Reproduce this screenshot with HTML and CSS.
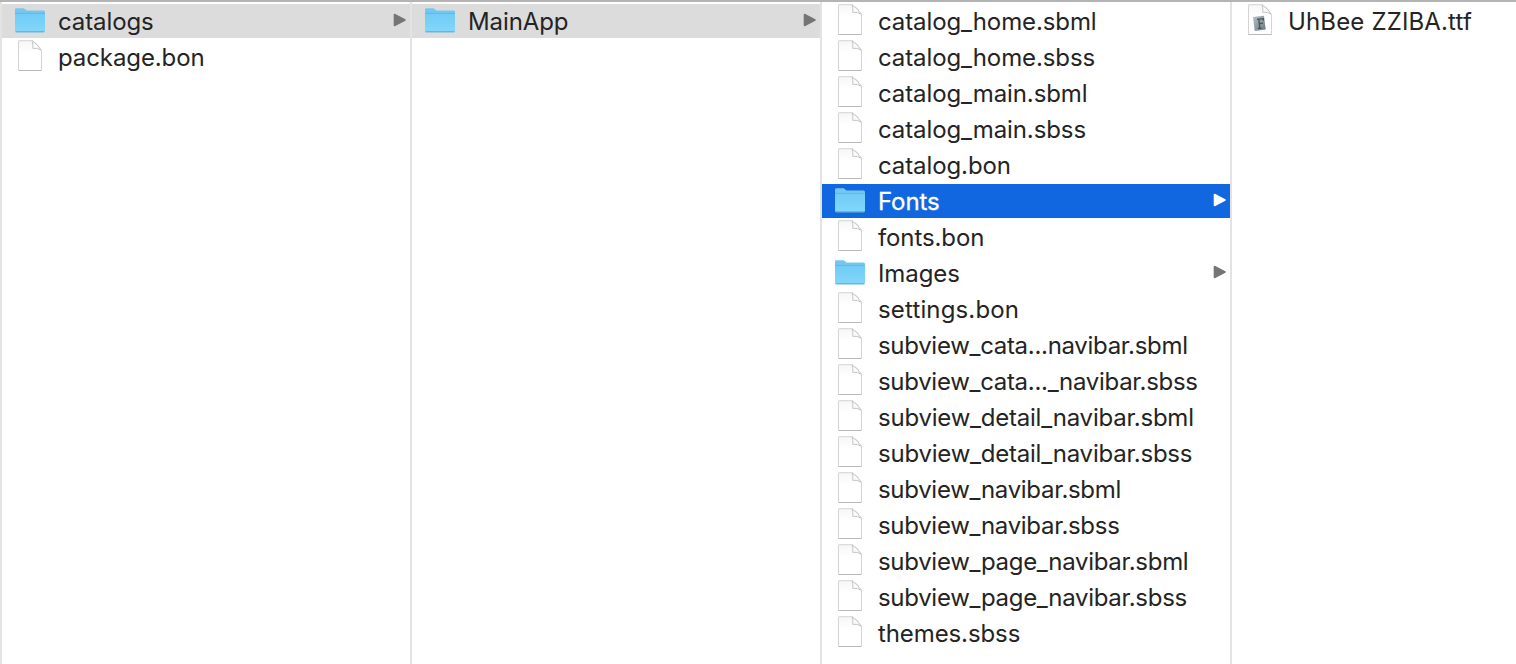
FILE: index.html
```html
<!DOCTYPE html>
<html lang="en">
<head>
<meta charset="utf-8">
<title>MainApp</title>
<link rel="stylesheet" href="styles.css">
</head>
<body>
<svg class="defs" width="0" height="0" aria-hidden="true">
  <defs>
    <linearGradient id="folder-front" x1="0" y1="0" x2="0" y2="1">
      <stop offset="0" stop-color="#70cbf5"/><stop offset="1" stop-color="#82d7fb"/>
    </linearGradient>
    <linearGradient id="paper" x1="0" y1="0" x2="0" y2="1">
      <stop offset="0" stop-color="#f6f6f6"/><stop offset=".4" stop-color="#fff"/>
    </linearGradient>
    <linearGradient id="tile" x1="0" y1="0" x2="1" y2="1">
      <stop offset="0" stop-color="#b3c1c7"/><stop offset="1" stop-color="#6c787d"/>
    </linearGradient>
    <symbol id="folder" viewBox="0 0 32 34">
      <path d="M1 7V5.500Q1 4.200 2.300 4.200H9q1 0 1.800.8l1 1Q12.400 6.500 13.500 6.500h16Q31 6.500 31 8V10H1z" fill="#74c8ef"/>
      <path d="M1 8.800h30v17.700q0 1.700-1.500 1.700h-27Q1 28.200 1 26.500z" fill="url(#folder-front)"/>
      <path d="M1 9.300h30" stroke="#62b8e0" stroke-width="1"/>
      <path d="M1.500 27.800h29" stroke="#62a5c4" stroke-width="1"/>
    </symbol>
    <symbol id="file" viewBox="0 0 32 34">
      <path d="M4.500 1.200q0-.5.500-.5h13Q23 3 27.500 10.500V30q0 .5-.5.500H5q-.5 0-.5-.5z" fill="url(#paper)" stroke="#d4d4d4"/>
      <path d="M18 .8Q19.200 3.500 18.800 8.300 23.500 7.600 27.300 10.300 24 4.500 18 .8z" fill="#fbfbfb" stroke="#c6c6c6"/>
      <path d="M4.500 30.500h23" stroke="#b8b8b8"/>
    </symbol>
    <symbol id="font-file" viewBox="0 0 32 34">
      <use href="#file" width="32" height="34"/>
      <path d="M9 13 20 11.700 21.700 25.500 10.700 27z" fill="url(#tile)"/>
      <path d="M13 15.300l6.300-.7.200 2M14.800 15.200l1 9M15.300 19.600l3.700-.4M14 24.500l3.500-.4" stroke="#46545a" stroke-width="1.300" fill="none"/>
    </symbol>
    <symbol id="arrow" viewBox="0 0 14 14">
      <path d="M1.500 1.500 12 7 1.500 12.500z" fill="currentColor" stroke="currentColor" stroke-width="1.600" stroke-linejoin="round"/>
    </symbol>
  </defs>
</svg>
<main class="browser">
  <ul class="column">
    <li class="row open"><svg class="icon"><use href="#folder"/></svg><span class="name">catalogs</span><svg class="arrow"><use href="#arrow"/></svg></li>
    <li class="row"><svg class="icon"><use href="#file"/></svg><span class="name">package.bon</span></li>
  </ul>
  <ul class="column">
    <li class="row open"><svg class="icon"><use href="#folder"/></svg><span class="name">MainApp</span><svg class="arrow"><use href="#arrow"/></svg></li>
  </ul>
  <ul class="column">
    <li class="row"><svg class="icon"><use href="#file"/></svg><span class="name">catalog_home.sbml</span></li>
    <li class="row"><svg class="icon"><use href="#file"/></svg><span class="name">catalog_home.sbss</span></li>
    <li class="row"><svg class="icon"><use href="#file"/></svg><span class="name">catalog_main.sbml</span></li>
    <li class="row"><svg class="icon"><use href="#file"/></svg><span class="name">catalog_main.sbss</span></li>
    <li class="row"><svg class="icon"><use href="#file"/></svg><span class="name">catalog.bon</span></li>
    <li class="row selected"><svg class="icon"><use href="#folder"/></svg><span class="name">Fonts</span><svg class="arrow"><use href="#arrow"/></svg></li>
    <li class="row"><svg class="icon"><use href="#file"/></svg><span class="name">fonts.bon</span></li>
    <li class="row"><svg class="icon"><use href="#folder"/></svg><span class="name">Images</span><svg class="arrow"><use href="#arrow"/></svg></li>
    <li class="row"><svg class="icon"><use href="#file"/></svg><span class="name loose">settings.bon</span></li>
    <li class="row"><svg class="icon"><use href="#file"/></svg><span class="name tight">subview_cata...navibar.sbml</span></li>
    <li class="row"><svg class="icon"><use href="#file"/></svg><span class="name tight">subview_cata..._navibar.sbss</span></li>
    <li class="row"><svg class="icon"><use href="#file"/></svg><span class="name snug">subview_detail_navibar.sbml</span></li>
    <li class="row"><svg class="icon"><use href="#file"/></svg><span class="name snug">subview_detail_navibar.sbss</span></li>
    <li class="row"><svg class="icon"><use href="#file"/></svg><span class="name tight">subview_navibar.sbml</span></li>
    <li class="row"><svg class="icon"><use href="#file"/></svg><span class="name tight">subview_navibar.sbss</span></li>
    <li class="row"><svg class="icon"><use href="#file"/></svg><span class="name tight">subview_page_navibar.sbml</span></li>
    <li class="row"><svg class="icon"><use href="#file"/></svg><span class="name tight">subview_page_navibar.sbss</span></li>
    <li class="row"><svg class="icon"><use href="#file"/></svg><span class="name">themes.sbss</span></li>
  </ul>
  <ul class="column">
    <li class="row"><svg class="icon"><use href="#font-file"/></svg><span class="name loose">UhBee ZZIBA.ttf</span></li>
  </ul>
</main>
</body>
</html>
```
FILE: styles.css
```css
* { box-sizing: border-box; }
body {
  margin: 0;
  background: #fff;
  color: #242424;
  font: 24px/34px Inter, "Liberation Sans", sans-serif;
}
.defs { display: block; }
.browser {
  display: grid;
  grid-template-columns: 410px 410px 410px 1fr;
  height: 664px;
  border-top: 2px solid #b4b4b4;
  overflow: hidden;
}
.column {
  display: flex;
  flex-direction: column;
  gap: 2px;
  margin: 0;
  padding: 2px 0 0;
  border-left: 2px solid #e3e3e3;
  list-style: none;
  min-width: 0;
}
.row {
  display: flex;
  align-items: center;
  flex: 0 0 34px;
  height: 34px;
  padding: 0 3px 0 12px;
}
.icon { flex: none; width: 32px; height: 34px; }
.name {
  flex: 1;
  margin-left: 12px;
  padding-top: 2px;
  white-space: nowrap;
  letter-spacing: -0.1px;
}
.snug { letter-spacing: -0.22px; }
.tight { letter-spacing: -0.3px; }
.loose { letter-spacing: 0.15px; }
.arrow { width: 14px; height: 14px; color: #757575; margin-top: -2px; }
.open { background: #dcdcdc; }
.selected { background: #1167df; color: #fff; }
.selected .name { -webkit-text-stroke: 0.3px #fff; }
.selected .arrow { color: #fff; }
```
